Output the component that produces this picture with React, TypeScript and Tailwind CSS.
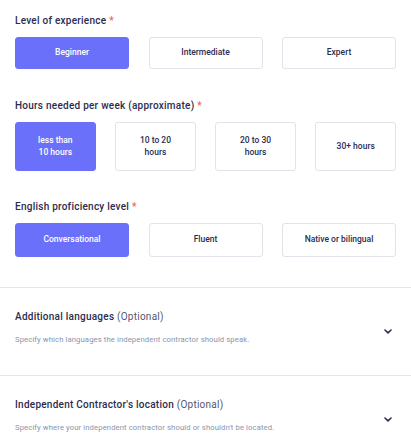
import { useState } from "react";

const font = { fontFamily: "Roboto, 'Noto Sans', sans-serif" };

function Label({ text }: { text: string }) {
  return (
    <div className="h-4 text-[10px] leading-4 font-medium tracking-[0.25px] text-[#2b2c4e] mb-2">
      {text} <span className="text-[#f0625f]">*</span>
    </div>
  );
}

function Options({
  items,
  selected,
  onSelect,
  height,
  cols,
}: {
  items: string[];
  selected: number;
  onSelect: (i: number) => void;
  height: string;
  cols: string;
}) {
  return (
    <div className={`grid ${cols} gap-x-[19.5px]`}>
      {items.map((item, i) => (
        <button
          key={item}
          onClick={() => onSelect(i)}
          className={`${height} rounded-[3px] px-2 text-[8.5px] leading-[11.5px] font-medium whitespace-pre-line ${
            i === selected
              ? "bg-[#6b70fb] text-white border border-[#6b70fb]"
              : "bg-white text-[#2b2c4e] border border-[#e1e3ea]"
          }`}
        >
          {item}
        </button>
      ))}
    </div>
  );
}

function Chevron() {
  return (
    <svg width="8" height="5" viewBox="0 0 8 5" fill="none">
      <path d="M1 1l3 2.8L7 1" stroke="#2b2c4e" strokeWidth="1.6" strokeLinecap="round" strokeLinejoin="round" />
    </svg>
  );
}

function Accordion({ title, desc }: { title: string; desc: string }) {
  return (
    <div className="h-[88px] border-b border-[#e3e5eb] flex items-center justify-between px-[15px]">
      <div className="mb-[9px]">
        <div className="text-[10px] leading-4 tracking-[0.25px] text-[#2b2c4e]">
          <span className="font-medium">{title}</span>{" "}
          <span className="text-[#55576f]">(Optional)</span>
        </div>
        <div className="mt-[9px] text-[7.7px] leading-3 tracking-[0.1px] text-[#8b94aa]">{desc}</div>
      </div>
      <div className="mr-[4px]">
        <Chevron />
      </div>
    </div>
  );
}

export default function App() {
  const [exp, setExp] = useState(0);
  const [hours, setHours] = useState(0);
  const [eng, setEng] = useState(0);

  return (
    <div className="bg-white w-[411px] h-[445px] overflow-hidden" style={font}>
      <div className="px-[15px] pt-[13px] pb-[30px] border-b border-[#e3e5eb]">
        <Label text="Level of experience" />
        <Options
          items={["Beginner", "Intermediate", "Expert"]}
          selected={exp}
          onSelect={setExp}
          height="h-8"
          cols="grid-cols-3"
        />
        <div className="mt-[29px]">
          <Label text="Hours needed per week (approximate)" />
          <Options
            items={["less than\n10 hours", "10 to 20\nhours", "20 to 30\nhours", "30+ hours"]}
            selected={hours}
            onSelect={setHours}
            height="h-[49px]"
            cols="grid-cols-4"
          />
        </div>
        <div className="mt-[28px]">
          <div className="mb-[1px]">
            <Label text="English proficiency level" />
          </div>
          <Options
            items={["Conversational", "Fluent", "Native or bilingual"]}
            selected={eng}
            onSelect={setEng}
            height="h-[34px]"
            cols="grid-cols-3"
          />
        </div>
      </div>
      <Accordion
        title="Additional languages"
        desc="Specify which languages the independent contractor should speak."
      />
      <Accordion
        title="Independent Contractor's location"
        desc="Specify where your independent contractor should or shouldn't be located."
      />
    </div>
  );
}
